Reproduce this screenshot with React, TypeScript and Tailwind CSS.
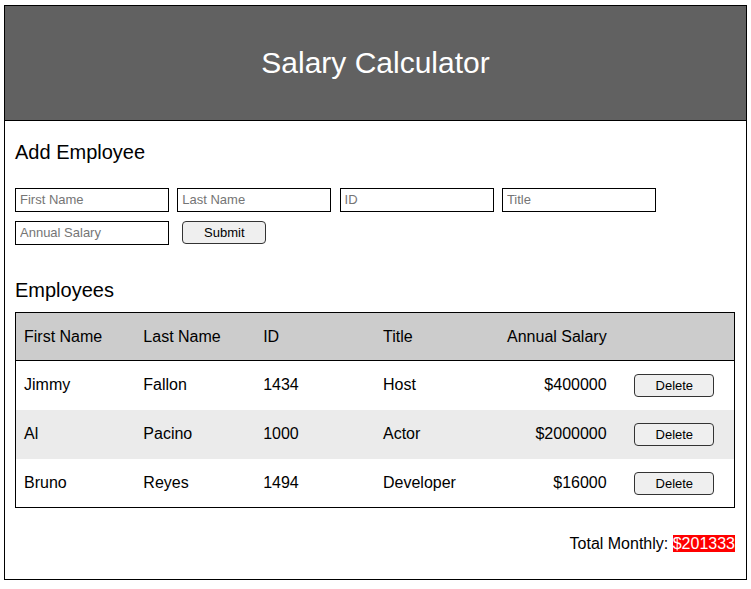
const employees = [
  { first: "Jimmy", last: "Fallon", id: "1434", title: "Host", salary: "$400000" },
  { first: "Al", last: "Pacino", id: "1000", title: "Actor", salary: "$2000000" },
  { first: "Bruno", last: "Reyes", id: "1494", title: "Developer", salary: "$16000" },
];

const inputCls =
  "w-[154px] h-[24px] border border-black px-[4px] pb-[1px] text-[13px] outline-none placeholder:text-[#757575]";

export default function App() {
  return (
    <div className="w-[751px] h-[589px] bg-white font-['Liberation_Sans',Arial,sans-serif] text-black">
      <main className="ml-[4px] mt-[5px] w-[743px] h-[575px] border border-black flex flex-col">
        <header className="h-[115px] bg-[#616161] border-b border-black flex items-center justify-center">
          <h1 className="text-[30px] leading-[34px] text-white">Salary Calculator</h1>
        </header>

        <section className="pl-[10px] pr-[11px]">
          <h2 className="mt-[20px] text-[20px] leading-[23px]">Add Employee</h2>
          <div className="mt-[24px] flex flex-wrap gap-x-[8.3px] gap-y-[9px] w-[660px]">
            <input className={inputCls} placeholder="First Name" />
            <input className={inputCls} placeholder="Last Name" />
            <input className={inputCls} placeholder="ID" />
            <input className={inputCls} placeholder="Title" />
            <input className={inputCls} placeholder="Annual Salary" />
            <button className="ml-[5px] w-[84px] h-[23px] border border-[#333] rounded-[4px] bg-[#efefef] text-[13px]">
              Submit
            </button>
          </div>

          <h2 className="mt-[34px] text-[20px] leading-[23px]">Employees</h2>
          <table className="mt-[10px] w-full table-fixed border border-black border-collapse text-[16px]">
            <thead>
              <tr className="h-[48px] bg-[#cccccc] border-b border-black">
                <th className="px-[8px] text-left font-normal">First Name</th>
                <th className="px-[8px] text-left font-normal">Last Name</th>
                <th className="px-[8px] text-left font-normal">ID</th>
                <th className="px-[8px] text-left font-normal">Title</th>
                <th className="px-[8px] text-right font-normal">Annual Salary</th>
                <th className="px-[8px]"></th>
              </tr>
            </thead>
            <tbody>
              {employees.map((e, i) => (
                <tr key={e.id} className={"h-[49px] " + (i === 1 ? "bg-[#ebebeb]" : "bg-white")}>
                  <td className="px-[8px]">{e.first}</td>
                  <td className="px-[8px]">{e.last}</td>
                  <td className="px-[8px]">{e.id}</td>
                  <td className="px-[8px]">{e.title}</td>
                  <td className="px-[8px] text-right">{e.salary}</td>
                  <td className="px-[8px] text-center">
                    <button className="w-[80px] h-[23px] border border-[#333] rounded-[4px] bg-[#efefef] text-[13px] align-middle">
                      Delete
                    </button>
                  </td>
                </tr>
              ))}
            </tbody>
          </table>

          <p className="mt-[27px] text-right text-[16px] leading-[18px]">
            Total Monthly: <span className="bg-[#ff0000] text-white">$201333</span>
          </p>
        </section>
      </main>
    </div>
  );
}
